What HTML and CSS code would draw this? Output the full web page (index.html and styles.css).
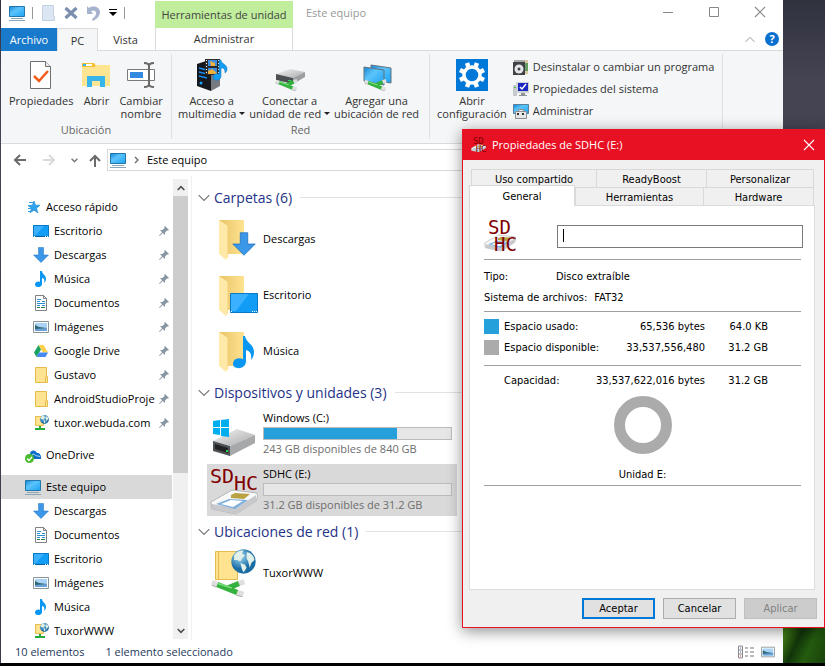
FILE: index.html
```html
<!DOCTYPE html>
<html lang="es">
<head>
<meta charset="utf-8">
<title>Este equipo</title>
<link rel="stylesheet" href="styles.css">
</head>
<body>
<svg class="sprite" aria-hidden="true">
  <defs>
    <linearGradient id="blue" x1="0" y1="0" x2="1" y2="1"><stop offset="0" stop-color="#1687d6"/><stop offset=".4" stop-color="#5cc4fb"/><stop offset="1" stop-color="#1ba2f4"/></linearGradient>
    <linearGradient id="metal" x1="0" y1="0" x2="1" y2="1"><stop offset="0" stop-color="#f4f4f4"/><stop offset="1" stop-color="#a9a9ab"/></linearGradient>
    <linearGradient id="gold" x1="0" y1="0" x2="1" y2="0"><stop offset="0" stop-color="#e8c468"/><stop offset="1" stop-color="#ffe390"/></linearGradient>
    <radialGradient id="sea" cx=".35" cy=".3"><stop offset="0" stop-color="#a4dcf6"/><stop offset="1" stop-color="#1c6da5"/></radialGradient>
  </defs>
  <symbol id="pc" viewBox="0 0 16 16"><path fill="url(#blue)" stroke="#2177a9" d="M.5 1.500h15v10H.5z"/><path fill="#8ea5b4" d="M2 13h12v1H2zM0 15h16v1H0z"/></symbol>
  <symbol id="desk" viewBox="0 0 16 16"><path fill="#119cf6" stroke="#0878c4" d="M.5 2.500h15v11H.5z"/><path fill="#3ab0ff" d="M1 3h10L3 12H1z"/><path fill="#0a5fa0" d="M1 13h14v1H1z"/><path fill="#fff" d="M1 13h1v1H1zM12 13h1v1h-1zM14 13h1v1h-1z"/></symbol>
  <symbol id="down" viewBox="0 0 16 16"><path fill="#3b97e8" stroke="#1d6fbd" stroke-width=".5" d="M5.500.5h5V8h5L8 15.500.5 8h5z"/></symbol>
  <symbol id="note" viewBox="0 0 16 16"><path fill="#0a97f2" d="M7 0h2c0 3 4 4 4 8 0 2-1 3-2 4 1-3 0-5-2-5v6c0 4-7 4-7 .5C2 11 5 10 7 11z"/></symbol>
  <symbol id="doc" viewBox="0 0 16 16"><path fill="#fff" stroke="#7b8185" d="M2.500.5h8l3 3v12h-11z"/><path fill="none" stroke="#7b8185" d="M10.500.5v3h3"/><path stroke="#2c8fd1" stroke-width="1" d="M4 6.500h3M4 4.500h4M9 6.500h3M4 8.500h8M4 10.500h3M9 10.500h3"/><path stroke="#3a7a52" d="M8 12.500h4M4 12.500h3"/></symbol>
  <symbol id="img" viewBox="0 0 16 16"><path fill="#fff" stroke="#8b9499" d="M.5 2.500h15v11H.5z"/><path fill="#a9d4f7" d="M2 4h12v8H2z"/><path fill="#2f6672" d="M2 6l4 2 8 1v1l-12 1z"/><path fill="#6aa3d8" d="M2 10l12-1v3H2z"/></symbol>
  <symbol id="drive" viewBox="0 0 16 16"><path fill="#1ba261" d="M5.500 2L8 6.500 3.500 14 1 9.500z"/><path fill="#ffcf48" d="M5.500 2h5L15 9.500h-5z"/><path fill="#4688f4" d="M6 9.500h9L12.500 14h-9z"/></symbol>
  <symbol id="fold" viewBox="0 0 16 16"><path fill="#ffe391" stroke="#e5bc4b" d="M2.500.5h11v9h1v6h-12z"/><path fill="none" stroke="#e5bc4b" d="M12.500 9.500v6"/></symbol>
  <symbol id="globe" viewBox="0 0 16 16"><circle cx="8" cy="8" r="7.800" fill="url(#sea)"/><path fill="#e3f0ea" d="M2 4c2-3 5-3 6-3L7 3l2 1-2 2-1 2-2-1-2 0zM6 9l3 1 1 2-2 3-1-2zM10 2c3 0 5 3 5 5l-2 2-1 3-1-4-1-2z"/></symbol>
  <symbol id="site" viewBox="0 0 16 16"><path fill="#ffe391" stroke="#e5bc4b" d="M2.500 1.500h8v9h-8z"/><use href="#globe" x="7" y="0" width="9" height="9"/><path fill="#27a93b" d="M6 11h2v2h4v2H2v-2h4z"/></symbol>
  <symbol id="star" viewBox="0 0 16 16"><path fill="#2fa4ec" stroke="#1680cc" stroke-width=".6" d="M9 2l1.500 4.200 4.500.1-3.500 2.900 1.300 4.600L9 11.200l-4 2.600 1.500-4.500L3 6.500l4.400-.3z"/><path stroke="#2fa4ec" d="M4 3.500h4M3 6.500h3M3 9.500h3M3 12.500h3"/></symbol>
  <symbol id="cloud" viewBox="0 0 16 16"><path fill="#0a6fcb" d="M1 11c0-3 2-4 4-4 0-4 5-5 7-1 3 0 4 2 4 5v1H1z"/><path fill="none" stroke="#fff" stroke-width=".7" d="M7 12c-2-4 1-6 3-4s4 0 5 2"/><circle cx="4.500" cy="11.500" r="4.500" fill="#4cbb2d"/><path fill="none" stroke="#fff" stroke-width="1.300" d="M2.200 11.500l1.800 2 3-3.700"/></symbol>
  <symbol id="pin" viewBox="0 0 10 10"><path fill="#8795a3" d="M6 0l4 4-1 .6L8 4.500 6 6.500 6 9 3.700 6.900.5 10 0 9.500 3.100 6.300 1 4h2.500L5.500 2 5.400 1z"/></symbol>
  <symbol id="cable" viewBox="0 0 40 20"><path stroke="#dedede" stroke-width="6" d="M1 4l6 2M29 15l7 2M31 5l6-2"/><path stroke="#a5a5a5" d="M1 7l5 2M28 18l7 2"/><path fill="none" stroke="#35b13f" stroke-width="6" d="M7 6l22 9M19 10l12-5"/><path fill="none" stroke="#7be07c" stroke-width="2" d="M8 5l15 5"/></symbol>
  <symbol id="bigfold" viewBox="0 0 40 42"><path fill="url(#gold)" d="M1 1h25v34H8z"/><path fill="#ffe9a8" d="M1 1l9 6v31l-2 3-7-6z"/><path fill="#f3d27c" opacity=".6" d="M9 7l1 0v31H9z"/></symbol>
  <symbol id="card" viewBox="0 0 48 26"><path fill="#fbfbfb" stroke="#b4b4b6" d="M1 13L22 1l25 3c1 3 0 6-1 8L26 25 2 20z"/><path fill="#c7c9cc" d="M2 15l24 4L46 6v6L26 25 2 20z"/><path fill="#f8f8f8" d="M3 14L22 3l22 2-18 12z"/><path fill="#7fb0dc" d="M6 15l13-5 19 1-13 9z"/><path fill="#fff" d="M11 15l10-4 12 1-10 6z"/><path fill="#b9a242" d="M21 6l4-2 15 1-6 5-13-1z"/></symbol>
  <symbol id="sdmini" viewBox="0 0 34 34"><use href="#card" x="0" y="15" width="32" height="18"/><text class="sd" x="4" y="15" font-size="19">SD</text><text class="sd" x="10" y="32" font-size="19">HC</text></symbol>
  <symbol id="chev" viewBox="0 0 12 8"><path fill="none" stroke="currentColor" stroke-width="1.200" d="M.7 1.200L6 6.500l5.300-5.300"/></symbol>
  <symbol id="x" viewBox="0 0 12 12"><path fill="none" stroke="currentColor" stroke-width="1.100" d="M1 1l10 10M11 1L1 11"/></symbol>
</svg>

<main class="desktop">
<div class="window">
  <header class="top">
    <div class="quick">
      <svg class="i16"><use href="#pc"/></svg>
      <span class="bar"></span>
      <svg class="i16" viewBox="0 0 16 16"><path fill="#dce6f3" stroke="#c3d0e2" d="M2.500 .5h11v11h1v4h-12z"/></svg>
      <svg class="i16" viewBox="0 0 16 16"><path stroke="#7c8fb1" stroke-width="3.200" d="M2.500 3l11 10M13.500 3l-11 10"/></svg>
      <svg class="i16" viewBox="0 0 16 16"><path fill="#a6b3cd" d="M1 1l2 2c4-3 11-1 11 4 0 4-3 7-7 9l-1-2c3-2 4-4 4-6 0-3-3-3-5-2l2 3H1z"/></svg>
      <svg class="more" viewBox="0 0 8 8"><path d="M0 0h8v1H0zM0 3h8L4 7z"/></svg>
      <span class="bar"></span>
    </div>
    <div class="context">Herramientas de unidad</div>
    <div class="caption"><h1>Este equipo</h1>
      <div class="winbtns">
        <button aria-label="Minimizar"><svg viewBox="0 0 12 12"><path stroke="currentColor" d="M1 6.500h10"/></svg></button>
        <button aria-label="Maximizar"><svg viewBox="0 0 12 12"><path fill="none" stroke="currentColor" d="M1.500 1.500h9v9h-9z"/></svg></button>
        <button aria-label="Cerrar"><svg><use href="#x"/></svg></button>
      </div>
    </div>
    <nav class="tabs">
      <button class="tab file">Archivo</button><button class="tab on">PC</button><button class="tab">Vista</button>
    </nav>
    <button class="tab admin">Administrar</button>
    <div class="help">
      <button aria-label="Contraer cinta"><svg class="up" viewBox="0 0 12 8"><use href="#chev"/></svg></button>
      <button class="round" aria-label="Ayuda">?</button>
    </div>
  </header>

  <section class="ribbon">
    <div class="group place">
      <div class="tools">
        <button class="big"><svg class="i32" viewBox="0 0 32 32"><path fill="#fff" stroke="#707070" d="M5.500 2.500h15l5 5v22h-20z"/><path fill="#eee" stroke="#707070" d="M20.500 2.500v5h5"/><path fill="none" stroke="#f25c19" stroke-width="2.500" d="M9 17l5 5 9-10"/></svg><span>Propiedades</span></button>
        <button class="big"><svg class="i32" viewBox="0 0 32 32"><path fill="#ffe592" d="M2 6h28v21H2z"/><path fill="#f3bf33" d="M2 4h12l2 3-2 1H2z"/><path fill="#fff" d="M4 5h8v2H4z"/><path fill="#35b5ea" d="M3 5h3v2H3zM7 28V17h18v11h-5v-6h-8v6z"/></svg><span>Abrir</span></button>
        <button class="big"><svg class="i32" viewBox="0 0 32 32"><path fill="#fff" stroke="#7a7a7a" d="M2.500 10.500h27v11h-27z"/><path fill="#3389e0" d="M5 13h13v6H5z"/><path fill="none" stroke="#686868" stroke-width="2" d="M24 5v22M19 4c3 0 5 1 5 3 0-2 2-3 5-3M19 28c3 0 5-1 5-3 0 2 2 3 5 3"/></svg><span>Cambiar<br>nombre</span></button>
      </div>
      <h2>Ubicación</h2>
    </div>
    <div class="group net">
      <div class="tools">
        <button class="big"><svg class="i32" viewBox="0 0 32 32"><path fill="#777b80" d="M10 3l14 3v21l-9 5z"/><path fill="#15181c" d="M1 5l9-3 5 4v26L1 27z"/><path stroke="#1c8df0" stroke-width="1.500" d="M3 9l8 2M3 13l8 2M3 17l8 2"/><circle cx="5" cy="24" r="1.500" fill="#18a3ff"/><path fill="#2b2b2b" d="M9 0h15v16H9z"/><path fill="#3c8de0" d="M12 1h9v6h-9zM12 9h9v6h-9z"/><path fill="#f0b13c" d="M14 2l5 2v3h-4zM12 12l4-2 5 4v1h-9z"/><path stroke="#fff" stroke-dasharray="1 2" d="M10.500 1v14M22.500 1v14"/><path fill="#159df3" stroke="#0a73c2" stroke-width=".5" d="M23 1h2c0 4 6 4 6 9 0 2-1 3-2 4 0-4-1-5-4-5v8c0 5-8 6-8 1 0-3 3-4 6-3z"/></svg><span>Acceso a<br>multimedia <i class="caret"></i></span></button>
        <button class="big"><svg class="i32" viewBox="0 0 32 32"><path fill="url(#metal)" d="M2 15l14-5 15 3-12 6z"/><path fill="#4c4f52" d="M2 15l17 4v6L2 21z"/><path fill="#9c9ea0" d="M19 19l12-6v5l-12 7z"/><path fill="#2bd94b" d="M14 21h3v1h-3z"/><use href="#cable" x="1" y="20" width="24" height="12"/></svg><span>Conectar a<br>unidad de red <i class="caret"></i></span></button>
        <button class="big"><svg class="i32" viewBox="0 0 32 32"><path fill="url(#blue)" stroke="#62737f" d="M10 6l20 3v15l-20-3z"/><path fill="url(#blue)" stroke="#62737f" d="M3 8l20 3v15L3 22z"/><use href="#cable" x="3" y="20" width="24" height="12"/></svg><span>Agregar una<br>ubicación de red</span></button>
      </div>
      <h2>Red</h2>
    </div>
    <div class="group sys">
      <div class="tools">
        <button class="big"><svg class="i32" viewBox="0 0 32 32"><path fill="#0078d7" d="M0 0h32v32H0z"/><circle cx="16" cy="16" r="8" fill="none" stroke="#fff" stroke-width="3.500"/><path stroke="#fff" stroke-width="4.500" d="M12.500 8L11 4M19.500 8L21 4M12.500 24L11 28M19.500 24l1.500 4M8 13l-4-2M8 19l-4 2M24 13l4-2M24 19l4 2"/></svg><span>Abrir<br>configuración</span></button>
        <div class="smalls">
          <button class="small"><svg class="i16" viewBox="0 0 16 16"><path fill="#d8c9a0" d="M7 1h8v14H7z"/><path fill="#649c63" d="M12 4h3v8h-3z"/><path fill="#3e4246" d="M0 3h12v13H0z"/><circle cx="6" cy="10" r="4.500" fill="#e4e6e8"/><circle cx="6" cy="10" r="1.500" fill="#3e4246"/><path fill="#a5a7a8" d="M1 1h11v2H1z"/></svg>Desinstalar o cambiar un programa</button>
          <button class="small"><svg class="i16" viewBox="0 0 16 16"><path fill="#c6cacc" d="M0 4h4v11H0z"/><path fill="#d0d3d5" d="M3 1h13v11H3z"/><path fill="#1b28bf" d="M5 2h10v8H5z"/><path fill="none" stroke="#fff" stroke-width="1.500" d="M7 6l2 2 4-5"/><path fill="#8c9295" d="M8 12h4v2h2v1H6v-1h2z"/><path fill="#3fc34c" d="M1 6h2v1H1z"/></svg>Propiedades del sistema</button>
          <button class="small"><svg class="i16" viewBox="0 0 16 16"><path fill="url(#blue)" stroke="#587f99" d="M.5 1.500h15v9H.5z"/><path fill="#e5e7e8" stroke="#8b8f92" d="M2.500 8.500h11v7h-11zM5.500 6.500h5v2h-5z"/><path fill="#333" d="M4 10h2v2H4zM9 10h2v2H9z"/></svg>Administrar</button>
        </div>
      </div>
    </div>
  </section>

  <nav class="address">
    <button aria-label="Atrás"><svg viewBox="0 0 14 12"><path fill="none" stroke="#6a6a6a" stroke-width="2" d="M13 6H2M7 1L2 6l5 5"/></svg></button>
    <button aria-label="Adelante" disabled><svg viewBox="0 0 14 12"><path fill="none" stroke="#dadada" stroke-width="2" d="M1 6h11M7 1l5 5-5 5"/></svg></button>
    <button class="hist" aria-label="Recientes"><svg viewBox="0 0 12 8"><path fill="none" stroke="#777" stroke-width="2.400" d="M1 1l5 5 5-5"/></svg></button>
    <button aria-label="Subir"><svg viewBox="0 0 14 12"><path fill="none" stroke="#6a6a6a" stroke-width="2" d="M7 13V2M2 7l5-5 5 5"/></svg></button>
    <div class="crumbs"><svg class="i16"><use href="#pc"/></svg><svg class="gt" viewBox="0 0 5 8"><path fill="none" stroke="#666" stroke-width="1.300" d="M1 1l3 3-3 3"/></svg><a href="#">Este equipo</a></div>
  </nav>

  <div class="body">
    <aside class="side">
      <nav class="tree">
        <a class="root" href="#"><svg class="i16"><use href="#star"/></svg>Acceso rápido</a>
        <a href="#"><svg class="i16"><use href="#desk"/></svg><span>Escritorio</span><svg class="pin"><use href="#pin"/></svg></a>
        <a href="#"><svg class="i16"><use href="#down"/></svg><span>Descargas</span><svg class="pin"><use href="#pin"/></svg></a>
        <a href="#"><svg class="i16"><use href="#note"/></svg><span>Música</span><svg class="pin"><use href="#pin"/></svg></a>
        <a href="#"><svg class="i16"><use href="#doc"/></svg><span>Documentos</span><svg class="pin"><use href="#pin"/></svg></a>
        <a href="#"><svg class="i16"><use href="#img"/></svg><span>Imágenes</span><svg class="pin"><use href="#pin"/></svg></a>
        <a href="#"><svg class="i16"><use href="#drive"/></svg><span>Google Drive</span><svg class="pin"><use href="#pin"/></svg></a>
        <a href="#"><svg class="i16"><use href="#fold"/></svg><span>Gustavo</span><svg class="pin"><use href="#pin"/></svg></a>
        <a href="#"><svg class="i16"><use href="#fold"/></svg><span>AndroidStudioProje</span><svg class="pin"><use href="#pin"/></svg></a>
        <a href="#"><svg class="i16"><use href="#site"/></svg><span>tuxor.webuda.com</span><svg class="pin"><use href="#pin"/></svg></a>
        <a class="root gap" href="#"><svg class="i16"><use href="#cloud"/></svg>OneDrive</a>
        <a class="root gap here" href="#"><svg class="i16"><use href="#pc"/></svg>Este equipo</a>
        <a href="#"><svg class="i16"><use href="#down"/></svg><span>Descargas</span></a>
        <a href="#"><svg class="i16"><use href="#doc"/></svg><span>Documentos</span></a>
        <a href="#"><svg class="i16"><use href="#desk"/></svg><span>Escritorio</span></a>
        <a href="#"><svg class="i16"><use href="#img"/></svg><span>Imágenes</span></a>
        <a href="#"><svg class="i16"><use href="#note"/></svg><span>Música</span></a>
        <a href="#"><svg class="i16"><use href="#site"/></svg><span>TuxorWWW</span></a>
      </nav>
      <div class="scroll">
        <button aria-label="Arriba"><svg class="up" viewBox="0 0 12 8"><path fill="none" stroke="#505050" stroke-width="2.500" d="M1 1l5 5 5-5"/></svg></button>
        <div class="track"><div class="thumb"></div></div>
        <button aria-label="Abajo"><svg viewBox="0 0 12 8"><path fill="none" stroke="#505050" stroke-width="2.500" d="M1 1l5 5 5-5"/></svg></button>
      </div>
    </aside>
    <section class="files">
      <h2><svg><use href="#chev"/></svg>Carpetas (6)</h2>
      <a class="item" href="#"><svg class="pic" viewBox="0 0 48 48"><use href="#bigfold" x="8" y="4" width="40" height="42"/><use href="#down" x="22" y="17" width="24" height="24"/></svg>Descargas</a>
      <a class="item" href="#"><svg class="pic" viewBox="0 0 48 48"><use href="#bigfold" x="8" y="4" width="40" height="42"/><path fill="#119cf6" stroke="#0878c4" d="M20.500 22.500h27v19h-27z"/><path fill="#3ab0ff" d="M21 23h18L26 40h-5z"/><path fill="#fff" d="M21 40h1v1h-1zM42 40h1v1h-1zM44 40h1v1h-1zM46 40h1v1h-1z"/></svg>Escritorio</a>
      <a class="item" href="#"><svg class="pic" viewBox="0 0 48 48"><use href="#bigfold" x="8" y="4" width="40" height="42"/><path fill="#0a97f2" d="M33 9h2c1 7 9 8 9 16 0 3-1 6-3 8 1-6-1-9-5-10v11c0 9-13 9-13 3 0-5 5-7 10-5z"/></svg>Música</a>
      <h2><svg><use href="#chev"/></svg>Dispositivos y unidades (3)</h2>
      <a class="item" href="#"><svg class="pic" viewBox="0 0 48 48"><path fill="url(#metal)" d="M3 31l24-12 18 6-25 11z"/><path fill="#505356" d="M3 31l17 5v10L3 41z"/><path fill="#202224" d="M5 34l13 4v5L5 39z"/><path fill="#a7a8aa" d="M20 36l25-11v8L20 46z"/><path fill="#2bd94b" d="M16 40h2v2h-2z"/><path fill="#00adef" d="M3 11l7-1v7H3zM11 10l8-1v8h-8zM3 18h7v7l-7-1zM11 18h8v9l-8-1z"/></svg>
        <div class="vol"><b>Windows (C:)</b><div class="meter"><div class="fill" style="width:71%"></div></div><small>243 GB disponibles de 840 GB</small></div></a>
      <a class="item picked" href="#"><svg class="pic" viewBox="0 0 48 48"><use href="#card" x="0" y="23" width="48" height="26"/><text class="sd" x="0" y="17" font-size="20">SD</text><text class="sd" x="24" y="24" font-size="20">HC</text></svg>
        <div class="vol"><b>SDHC (E:)</b><div class="meter"></div><small>31.2 GB disponibles de 31.2 GB</small></div></a>
      <h2><svg><use href="#chev"/></svg>Ubicaciones de red (1)</h2>
      <a class="item" href="#"><svg class="pic" viewBox="0 0 48 48"><path fill="#ffe391" stroke="#e5bc4b" d="M5.500 2.500h22v28h-22z"/><path fill="none" stroke="#e5bc4b" d="M8.500 3v27"/><use href="#globe" x="21" y="0" width="25" height="25"/><use href="#cable" x="1" y="30" width="36" height="18"/></svg>TuxorWWW</a>
    </section>
  </div>

  <footer class="status"><span>10 elementos</span><span>1 elemento seleccionado</span>
    <div class="views">
      <button aria-label="Detalles"><svg class="i16" viewBox="0 0 16 13"><path fill="none" stroke="#8a8a8a" d="M.5.5h4v12h-4zM.5 4.500h4M.5 8.500h4"/><path stroke="#777" d="M7 2.500h3M12 2.500h4M7 6.500h3M12 6.500h4M7 10.500h3M12 10.500h4"/><path fill="#c33" d="M2 10h1v1H2z"/><path fill="#36c" d="M2 2h1v1H2zM2 6h1v1H2z"/></svg></button>
      <button aria-label="Iconos"><svg class="i14"><use href="#img"/></svg></button>
    </div>
  </footer>
</div>

<section class="dialog" role="dialog" aria-labelledby="dt">
  <header><svg class="i16"><use href="#sdmini"/></svg><h2 id="dt">Propiedades de SDHC (E:)</h2><button aria-label="Cerrar"><svg><use href="#x"/></svg></button></header>
  <div class="sheet">
    <div class="rowtabs back"><button>Uso compartido</button><button>ReadyBoost</button><button>Personalizar</button></div>
    <div class="rowtabs front"><button class="sel">General</button><button>Herramientas</button><button>Hardware</button></div>
    <div class="panel">
      <div class="name"><svg><use href="#sdmini"/></svg><div class="field"><input type="text" aria-label="Etiqueta de volumen"><i></i></div></div>
      <dl><div class="type"><dt>Tipo:</dt><dd>Disco extraíble</dd></div><div><dt>Sistema de archivos:</dt><dd>FAT32</dd></div></dl>
      <table>
        <tbody>
          <tr><th scope="row"><i class="key used"></i>Espacio usado:</th><td>65,536 bytes</td><td class="short">64.0 KB</td></tr>
          <tr><th scope="row"><i class="key free"></i>Espacio disponible:</th><td>33,537,556,480</td><td class="short">31.2 GB</td></tr>
        </tbody>
      </table>
      <table class="total">
        <tbody><tr><th scope="row"><i class="key"></i>Capacidad:</th><td>33,537,622,016 bytes</td><td class="short">31.2 GB</td></tr></tbody>
      </table>
      <figure><svg viewBox="0 0 58 58"><circle cx="29" cy="29" r="23.500" fill="none" stroke="#ababab" stroke-width="11"/></svg><figcaption>Unidad E:</figcaption></figure>
    </div>
    <div class="actions"><button class="ok">Aceptar</button><button>Cancelar</button><button disabled>Aplicar</button></div>
  </div>
</section>
</main>
</body>
</html>
```
FILE: styles.css
```css
* { box-sizing: border-box; }
body { margin: 0; font: 11px/16px "Open Sans", "Noto Sans", sans-serif; color: #000; }
button { font: inherit; color: inherit; background: none; border: 0; padding: 0; margin: 0; }
a { color: inherit; text-decoration: none; }
h1, h2 { margin: 0; font-size: inherit; font-weight: 400; }
svg { display: block; flex: none; }
.sprite { position: absolute; width: 0; height: 0; }
.i14 { width: 14px; height: 14px; }
.i16 { width: 16px; height: 16px; }
.i32 { width: 32px; height: 32px; }
.sd { font-family: "DejaVu Sans Mono", monospace; fill: #800000; }
.up { transform: rotate(180deg); }

.desktop {
  position: relative; min-height: 100vh; padding: 0 42px 3px 1px; display: flex;
  background:
    linear-gradient(#000, #000) bottom / 100% 3px no-repeat,
    linear-gradient(115deg, #3f7a16 10%, #12340a 35%, #245c0f 60%, #173f09) right bottom / 42px 40px no-repeat,
    linear-gradient(#30323e, #454453 12%, #3c3b48);
}
.window { flex: 1; min-width: 0; display: flex; flex-direction: column; background: #fff; }

.top { display: grid; grid-template: 28px 23px / 154px 138px 1fr; color: #444; }
.quick { display: flex; align-items: center; padding: 0 0 3px 8px; gap: 7px; }
.quick .bar { width: 1px; height: 12px; background: #999; }
.quick .more { width: 8px; height: 8px; }
.context { background: #c0ee9c; margin-top: 1px; text-align: center; line-height: 28px; }
.caption { display: flex; padding-left: 13px; line-height: 26px; color: #999; }
.winbtns { margin-left: auto; display: flex; }
.winbtns button { width: 46px; display: grid; place-items: center; padding-bottom: 4px; color: #888; }
.winbtns svg { width: 12px; height: 12px; }
.tabs { display: flex; border-bottom: 1px solid #dadbdc; }
.tab { height: 23px; text-align: center; color: #333; }
.file { width: 56px; background: #1979ca; color: #fff; }
.on { width: 41px; height: 24px; background: #f5f6f7; border: 1px solid #dadbdc; border-bottom: 0; }
.tab:last-child { width: 55px; }
.admin { border: solid #dadbdc; border-width: 0 1px 1px; }
.help { display: flex; justify-content: flex-end; align-items: center; gap: 10px; padding-right: 4px; border-bottom: 1px solid #dadbdc; }
.help svg { width: 10px; height: 7px; color: #999; }
.round { width: 14px; height: 14px; border-radius: 50%; background: #0a6fce; color: #fff; font-weight: 700; line-height: 14px; }

.ribbon { display: flex; height: 93px; background: #f5f6f7; border-bottom: 1px solid #dadbdc; color: #333; }
.group { margin: 3px 0 4px; border-right: 1px solid #e0e1e2; display: flex; flex-direction: column; justify-content: space-between; }
.group h2 { text-align: center; color: #666; line-height: 18px; }
.tools { display: flex; padding-top: 5px; }
.place { width: 171px; }
.net { width: 258px; }
.sys { width: 293px; }
.place .tools { padding-left: 8px; gap: 7px; }
.net .tools { padding-left: 6px; gap: 4px; }
.sys .tools { padding-left: 7px; gap: 6px; }
.big { display: flex; flex-direction: column; align-items: center; gap: 3px; line-height: 13px; white-space: nowrap; }
.caret { display: inline-block; border: solid transparent; border-width: 3px 3px 0; border-top-color: #222; vertical-align: 3px; }
.smalls { display: flex; flex-direction: column; margin-top: -3px; }
.small { display: flex; align-items: center; gap: 4px; height: 22px; white-space: nowrap; }

.address { display: flex; align-items: center; height: 32px; padding-left: 12px; }
.address button { width: 14px; margin-right: 15px; }
.address button svg { width: 14px; height: 12px; overflow: visible; }
.address .hist { width: 7px; margin-right: 10px; }
.address .hist svg { width: 7px; height: 5px; }
.address .hist + button { margin-right: 5px; }
.crumbs { flex: 1; display: flex; align-items: center; gap: 8px; height: 22px; border: 1px solid #d9d9d9; padding-left: 2px; }
.gt { width: 5px; height: 8px; }

.body { flex: 1; display: flex; min-height: 0; }
.side { display: flex; width: 191px; border-right: 1px solid #f0f0f0; height: 464px; }
.tree { width: 171px; padding-top: 19px; overflow: hidden; }
.tree a { display: flex; align-items: center; gap: 5px; height: 24px; padding-left: 32px; }
.tree a.root { padding-left: 24px; }
.tree a.gap { margin-top: 8px; }
.tree .here { background: #d9d9d9; }
.tree span { flex: 1; overflow: hidden; white-space: nowrap; }
.tree .pin { width: 10px; height: 10px; margin: 0 3px 0 -2px; }
.scroll { width: 15px; margin: 3px 0 1px 1px; background: #f0f0f0; display: flex; flex-direction: column; }
.scroll button { height: 17px; display: grid; place-items: center; }
.scroll svg { width: 8px; height: 6px; }
.track { flex: 1; }
.thumb { height: 65%; background: #cdcdcd; }

.files { flex: 1; padding: 8px 0 0 6px; }
.files h2 { display: flex; align-items: center; height: 27px; font-size: 14px; color: #1e3287; }
.files h2 svg { width: 12px; height: 8px; color: #777; margin-right: 4px; }
.files h2::after { content: ""; flex: 1; height: 1px; background: #e2e2e2; margin-left: 8px; }
.item { display: flex; align-items: center; gap: 5px; height: 56px; width: 250px; margin-left: 9px; padding-left: 3px; }
.pic { width: 48px; height: 48px; overflow: visible; }
.picked { background: #d9d9d9; border: solid #fff; border-width: 2px 0; }
.vol { width: 189px; padding-bottom: 2px; }
.vol b, .vol small { display: block; font-size: 11px; font-weight: 400; line-height: 16px; white-space: nowrap; }
.vol small { color: #6d6d6d; }
.meter { height: 13px; margin: 1px 0; border: 1px solid #bcbcbc; background: #e6e6e6; }
.fill { height: 100%; background: #26a0da; }

.status { display: flex; height: 23px; align-items: center; gap: 21px; padding: 0 8px 0 14px; color: #1e395b; }
.views { margin-left: auto; display: flex; align-items: center; gap: 7px; }

.dialog {
  position: absolute; right: 0; top: 129px; width: 363px; height: 499px; display: flex; flex-direction: column;
  background: #f0f0f0; border: 1px solid #e81123; box-shadow: 0 3px 14px rgba(0, 0, 0, .45);
  font: 11px/13px "DejaVu Sans Condensed", "DejaVu Sans", sans-serif;
}
.dialog header { display: flex; align-items: center; gap: 5px; height: 30px; padding: 0 9px 0 8px; background: #e81123; color: #fff; font: 11px/16px "Open Sans", sans-serif; }
.dialog header button { margin-left: auto; }
.dialog header button svg { width: 12px; height: 12px; }
.sheet { flex: 1; display: flex; flex-direction: column; padding: 9px 9px 8px 6px; }
.rowtabs { display: grid; margin: 0 1px 0 2px; }
.rowtabs button { height: 18px; padding-top: 1px; border: 1px solid #d9d9d9; border-width: 1px 0 0 1px; }
.rowtabs button:last-child { border-right-width: 1px; }
.back { grid-template-columns: 125fr 110fr 108fr; }
.front { grid-template-columns: 104fr 128fr 111fr; }
.front .sel { position: relative; margin: -2px 0 -1px -2px; height: 21px; padding: 0; background: #fff; z-index: 1; border-right-width: 1px; }
.panel { flex: 1; border: 1px solid #dcdcdc; background: #fff; padding: 12px 13px 0 14px; }
.name { display: flex; align-items: center; justify-content: space-between; height: 41px; padding-bottom: 5px; margin-right: -2px; }
.name svg { width: 34px; height: 34px; }
.field { position: relative; width: 246px; }
.field input { width: 100%; height: 23px; border: 1px solid #7a7a7a; display: block; }
.field i { position: absolute; left: 6px; top: 4px; width: 1px; height: 13px; background: #000; }
dl { margin: 0; border: solid #a0a0a0; border-width: 1px 0; padding: 6px 0 3px; height: 53px; }
dl div { display: flex; height: 21px; align-items: center; gap: 7px; }
dd { margin: 0; }
.type dt { width: 65px; }
table { width: 284px; table-layout: fixed; border-collapse: collapse; margin: 4px 0 7px; }
th { width: 111px; font-weight: 400; text-align: left; padding: 0; height: 21px; white-space: nowrap; }
td { text-align: right; padding: 0; white-space: nowrap; }
.short { width: 63px; }
.key { display: inline-block; width: 15px; height: 15px; margin-right: 5px; vertical-align: middle; }
.used { background: #26a0da; }
.free { background: #ababab; }
.total { width: 100%; margin: 0; border-top: 1px solid #a0a0a0; }
.total th, .total td { height: 30px; }
.total .short { width: 96px; padding-right: 33px; }
figure { margin: 0; padding-bottom: 4px; border-bottom: 1px solid #a0a0a0; text-align: center; }
figure svg { width: 58px; height: 58px; margin: 0 auto 14px; }
.actions { display: flex; justify-content: flex-end; gap: 8px; margin: 8px -2px 0 0; }
.actions button { width: 73px; height: 21px; background: #e1e1e1; border: 1px solid #adadad; }
.actions .ok { border: 2px solid #0078d7; }
.actions button:disabled { background: #ccc; border-color: #bfbfbf; color: #838383; }
```
